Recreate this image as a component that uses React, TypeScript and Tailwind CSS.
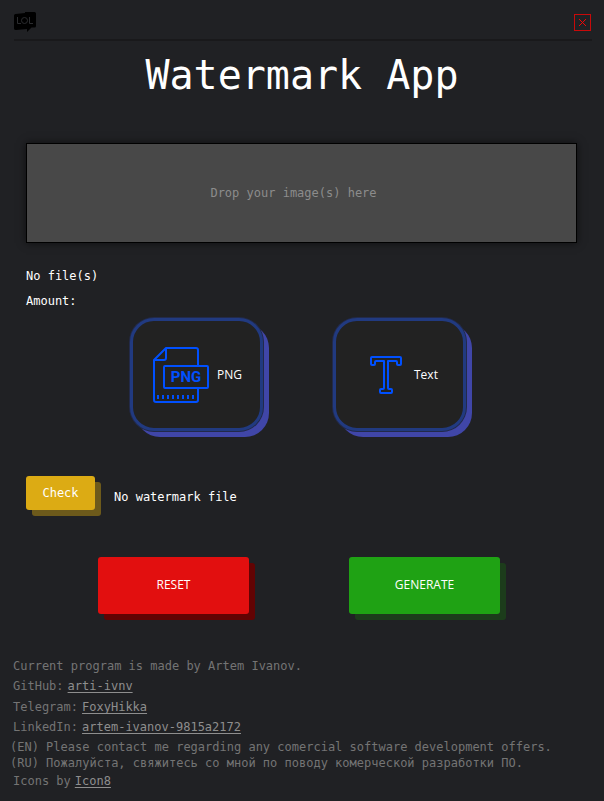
import type { ReactNode } from "react";

function LolIcon() {
  return (
    <svg width="22" height="20" viewBox="0 0 22 20" aria-hidden="true">
      <path d="M1.500 2L11 1V0H20.500Q22 0 22 1.500V14Q22 15.500 20.500 15.500H17.500L13 20V17L2 18Q0 18 0 16.500V3.500Q0 2 1.500 2Z" fill="#000" />
      <g fill="none" stroke="#2b2c2f" strokeWidth="1">
        <path d="M3.500 5v6.500h3.500" />
        <circle cx="10.500" cy="8.500" r="3" />
        <path d="M15.500 5v6.500h3.500" />
      </g>
    </svg>
  );
}

function CloseIcon() {
  return (
    <svg width="17" height="17" viewBox="0 0 17 17" aria-hidden="true">
      <rect x="0.5" y="0.5" width="16" height="16" fill="none" stroke="#c80a0a" />
      <path d="M5 5l7 7M12 5l-7 7" stroke="#f00505" strokeWidth="1" />
    </svg>
  );
}

function PngIcon() {
  return (
    <svg width="56" height="56" viewBox="0 0 56 56" aria-hidden="true">
      <g fill="none" stroke="#0050ff" strokeWidth="2" strokeLinejoin="round">
        <path d="M45 18V3Q45 1 43 1H13L1 13V53Q1 55 3 55H43Q45 55 45 53V42" />
        <path d="M13 1V11Q13 13 11 13H1" />
        <rect x="11" y="19" width="44" height="22" rx="1" />
      </g>
      <path d="M4 50H43" stroke="#0050ff" strokeWidth="4" strokeDasharray="2 3" />
      <text x="33" y="35" textAnchor="middle" fill="#0050ff" className="font-['Roboto',sans-serif] text-[15px] font-bold">
        PNG
      </text>
    </svg>
  );
}

function TextIcon() {
  return (
    <svg width="32" height="38" viewBox="0 0 32 38" aria-hidden="true">
      <path
        d="M2 1H30Q31 1 31 2V8Q31 9 30 9H28Q27 9 27 8V6Q27 5 26 5H18V32Q18 33 19 33H21Q22 33 22 34V36Q22 37 21 37H11Q10 37 10 36V34Q10 33 11 33H13Q14 33 14 32V5H6Q5 5 5 6V8Q5 9 4 9H2Q1 9 1 8V2Q1 1 2 1Z"
        fill="none"
        stroke="#0050ff"
        strokeWidth="2"
        strokeLinejoin="round"
      />
    </svg>
  );
}

function ModeButton({ label, children }: { label: string; children: ReactNode }) {
  return (
    <button
      type="button"
      className="flex h-[113px] w-[133px] items-center rounded-3xl border-3 border-[#213a80] bg-[#222222] font-['Open_Sans',sans-serif] text-xs text-white shadow-[0_0_0_1px_#222a4a,6px_6px_0_#4046a8]"
    >
      {children}
      {label}
    </button>
  );
}

function FooterLink({ label, text, href }: { label: string; text: string; href: string }) {
  return (
    <p className="flex h-5 items-center gap-1">
      <span>{label}</span>
      <a href={href} className="text-[#8e8e8e] underline underline-offset-2">
        {text}
      </a>
    </p>
  );
}

export default function App() {
  return (
    <div className="min-h-screen bg-[#202124] font-['DejaVu_Sans_Mono',monospace] text-xs text-white">
      <header className="mr-3 ml-3.5 flex h-[41px] items-start justify-between border-b-2 border-[#19191b] pt-3">
        <LolIcon />
        <button type="button" aria-label="Close" className="mt-0.5 mr-px">
          <CloseIcon />
        </button>
      </header>

      <main className="px-[26px]">
        <h1 className="mt-2.5 text-center text-[40px] leading-[48px]">Watermark App</h1>

        <label className="mt-11 mr-px flex h-[100px] items-center justify-center border border-black bg-[#484848] pr-4 text-[#8c8c8c] shadow-[0_0_8px_rgba(0,0,0,0.6)]">
          Drop your image(s) here
          <input type="file" multiple className="sr-only" />
        </label>

        <p className="mt-6 leading-[18px]">No file(s)</p>
        <p className="mt-[7px] leading-[18px]">Amount:</p>

        <div className="mt-2 flex justify-center gap-[70px] pr-2">
          <ModeButton label="PNG">
            <span className="mr-2 ml-5">
              <PngIcon />
            </span>
          </ModeButton>
          <ModeButton label="Text">
            <span className="mr-3 ml-[34px]">
              <TextIcon />
            </span>
          </ModeButton>
        </div>

        <div className="mt-[45px] flex items-center">
          <button type="button" className="h-[34px] w-[69px] rounded-[3px] bg-[#dcab14] shadow-[6px_6px_0_#6d5a1b]">
            Check
          </button>
          <p className="ml-[19px] pt-2">No watermark file</p>
        </div>

        <div className="mt-[47px] flex justify-center gap-[100px] pr-1.5 font-['Open_Sans',sans-serif]">
          <button type="button" className="h-[57px] w-[151px] rounded-[3px] bg-[#e20f0f] pb-0.5 shadow-[6px_6px_0_#620303]">
            RESET
          </button>
          <button type="button" className="h-[57px] w-[151px] rounded-[3px] bg-[#1fa214] pb-0.5 shadow-[6px_6px_0_#1c3c1b]">
            GENERATE
          </button>
        </div>
      </main>

      <footer className="mt-[42px] px-[13px] text-[#747474]">
        <p className="flex h-5 items-center">Current program is made by Artem Ivanov.</p>
        <FooterLink label="GitHub:" text="arti-ivnv" href="#github" />
        <div className="pt-px">
          <FooterLink label="Telegram:" text="FoxyHikka" href="#telegram" />
          <FooterLink label="LinkedIn:" text="artem-ivanov-9815a2172" href="#linkedin" />
        </div>
        <div className="-ml-[3px] pt-0.5 leading-4">
          <p>(EN) Please contact me regarding any comercial software development offers.</p>
          <p>(RU) Пожалуйста, свяжитесь со мной по поводу комерческой разработки ПО.</p>
        </div>
        <FooterLink label="Icons by" text="Icon8" href="#icon8" />
      </footer>
    </div>
  );
}
